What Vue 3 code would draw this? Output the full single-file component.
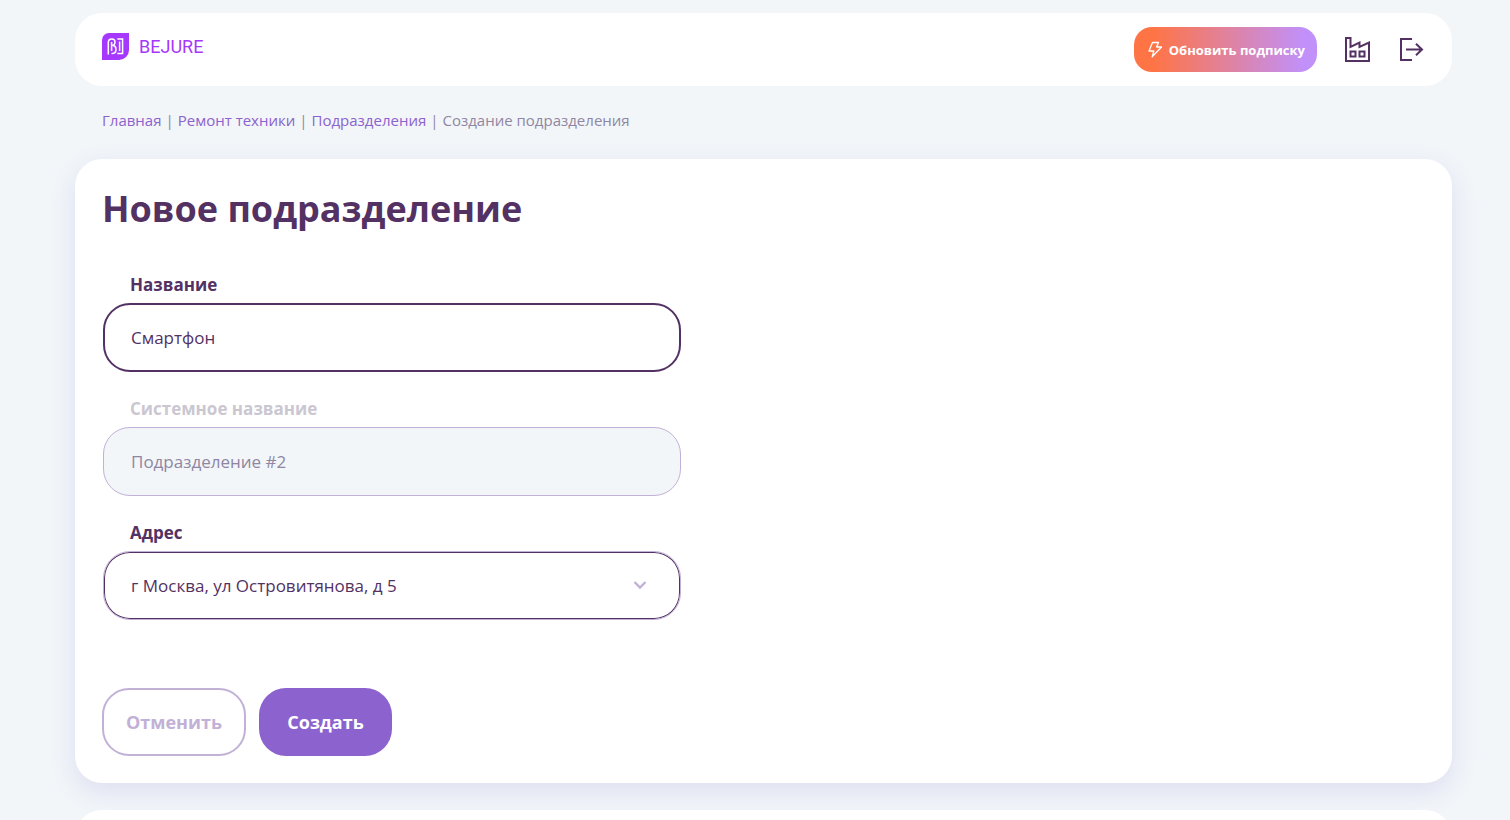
<template>
  <div class="page">
    <header class="header">
      <a href="#" class="logo" aria-label="BEJURE">
        <svg class="logo-mark" viewBox="0 0 27 27" aria-hidden="true">
          <path d="M7 0H27V17A10 10 0 0 1 17 27H0V7A7 7 0 0 1 7 0Z" fill="#a637fd" />
          <g fill="none" stroke="#fff" stroke-width="1.5">
            <path d="M6.3 21.5V9.5Q6.3 6 9.8 6Q13 6 13 9Q13 12.3 9.8 12.3Q14 12.5 14 16.5Q14 20.6 9.5 20.6" />
            <path d="M9.6 9V18M15.3 6H20.6V20.6H15.3M17.6 8.5V18" />
          </g>
        </svg>
        <span class="logo-name">BEJURE</span>
      </a>
      <div class="header-actions">
        <button type="button" class="subscribe">
          <svg viewBox="0 0 16 18" width="16" height="18" aria-hidden="true">
            <path d="M5.5 1.5H11.5L9.5 6H14.5L5.2 15.8L6.8 10H2Z" fill="none" stroke="#fff" stroke-width="1.3" stroke-linejoin="round" />
          </svg>
          Обновить подписку
        </button>
        <button type="button" class="icon-button" aria-label="Организация">
          <svg viewBox="0 0 27 27" width="27" height="27" aria-hidden="true">
            <g fill="none" stroke="#533163" stroke-width="2">
              <path d="M2 25V2H6.5V11L15.5 6.5V11L25 6.5V25Z" />
              <rect x="6.5" y="15.5" width="5" height="5" />
              <rect x="15.5" y="15.5" width="5" height="5" />
            </g>
          </svg>
        </button>
        <button type="button" class="icon-button" aria-label="Выйти">
          <svg viewBox="0 0 27 27" width="27" height="27" aria-hidden="true">
            <path d="M14 3H3V24H14M8 13.5H24M18 7.8L24 13.5L18 19.2" fill="none" stroke="#533163" stroke-width="2" />
          </svg>
        </button>
      </div>
    </header>

    <nav class="breadcrumbs">
      <template v-for="crumb in crumbs" :key="crumb">
        <a href="#">{{ crumb }}</a>
        <span class="separator">|</span>
      </template>
      <span class="current">Создание подразделения</span>
    </nav>

    <main class="card">
      <h1>Новое подразделение</h1>
      <form @submit.prevent>
        <div class="field">
          <label for="name">Название</label>
          <input id="name" v-model="name" type="text" class="control active" />
        </div>
        <div class="field disabled">
          <label for="system-name">Системное название</label>
          <input id="system-name" :value="systemName" type="text" class="control" disabled />
        </div>
        <div class="field">
          <label for="address">Адрес</label>
          <div class="select-wrap">
            <select id="address" v-model="address" class="control">
              <option v-for="item in addresses" :key="item">{{ item }}</option>
            </select>
            <svg class="chevron" viewBox="0 0 14 10" width="14" height="10" aria-hidden="true">
              <path d="M1.5 2L7 7.5L12.5 2" fill="none" stroke="#c2b1d6" stroke-width="2.4" />
            </svg>
          </div>
        </div>
        <div class="buttons">
          <button type="button" class="cancel">Отменить</button>
          <button type="submit" class="create">Создать</button>
        </div>
      </form>
    </main>

    <footer class="footer"></footer>
  </div>
</template>

<script setup>
import { ref } from 'vue'

const crumbs = ['Главная', 'Ремонт техники', 'Подразделения']
const addresses = ['г Москва, ул Островитянова, д 5']

const name = ref('Смартфон')
const systemName = ref('Подразделение #2')
const address = ref(addresses[0])
</script>

<style>
html {
  scrollbar-width: none;
}

body {
  margin: 0;
  background: #f2f6f9;
}
</style>

<style scoped>
.page {
  padding: 13px 58px 0 75px;
  font-family: 'Segoe UI', 'Open Sans', 'Noto Sans', sans-serif;
  color: #533163;
}

button,
input,
select {
  box-sizing: border-box;
  font-family: inherit;
}

button {
  cursor: pointer;
}

.header {
  display: flex;
  align-items: center;
  justify-content: space-between;
  height: 73px;
  padding: 0 27px;
  box-sizing: border-box;
  border-radius: 27px;
  background: #fff;
}

.logo {
  display: flex;
  align-items: center;
  gap: 10px;
  margin-bottom: 6px;
  color: #a637fd;
  text-decoration: none;
}

.logo-mark {
  width: 27px;
  height: 27px;
}

.logo-name {
  font-family: Roboto, sans-serif;
  font-size: 18px;
  line-height: 27px;
}

.header-actions {
  display: flex;
  align-items: center;
  gap: 27px;
}

.subscribe {
  display: flex;
  align-items: center;
  gap: 6px;
  height: 45px;
  padding: 0 12px 0 13px;
  border: 0;
  border-radius: 18px;
  background: linear-gradient(90deg, #ff7444 10%, #c190f8 92%);
  color: #fff;
  font-size: 13px;
  font-weight: 700;
  white-space: nowrap;
}

.icon-button {
  display: flex;
  padding: 0;
  border: 0;
  background: none;
}

.breadcrumbs {
  display: flex;
  gap: 4px;
  padding: 24px 27px 28px;
  font-size: 15px;
  line-height: 21px;
}

.breadcrumbs a {
  color: #8c62ce;
  text-decoration: none;
}

.separator,
.current {
  color: #8f86a3;
}

.card {
  padding: 27px;
  border-radius: 27px;
  background: #fff;
  box-shadow: 0 9px 27px rgba(97, 88, 190, 0.14);
}

h1 {
  margin: 0 0 41px;
  font-size: 36px;
  line-height: 46px;
  font-weight: 700;
}

.field {
  display: flex;
  flex-direction: column;
  gap: 6px;
  max-width: 578px;
  margin: 0 0 25px 1px;
}

label {
  padding-left: 27px;
  font-size: 17px;
  line-height: 24px;
  font-weight: 700;
}

.disabled label {
  color: #cbc7d1;
}

.control {
  width: 100%;
  height: 69px;
  padding: 0 27px;
  border: 1px solid #533163;
  border-radius: 27px;
  outline: 0;
  background: #fff;
  color: #533163;
  font-size: 17px;
}

.control.active {
  padding: 0 26px;
  border-width: 2px;
}

.control:disabled {
  border-color: #c2b1d6;
  background: #f2f6f9;
  color: #8f86a3;
}

.select-wrap {
  position: relative;
}

select.control {
  display: block;
  appearance: none;
  border: 1px solid #c2b1d6;
  box-shadow: inset 0 0 0 1px #533163;
}

.chevron {
  position: absolute;
  top: 29px;
  right: 34px;
  pointer-events: none;
}

.buttons {
  display: flex;
  gap: 13px;
  margin-top: 68px;
}

.cancel,
.create {
  height: 68px;
  border-radius: 27px;
  font-size: 18px;
  font-weight: 700;
}

.cancel {
  min-width: 144px;
  padding: 0 20px;
  border: 2px solid #c2b1d6;
  background: #fff;
  color: #c2b1d6;
}

.create {
  min-width: 133px;
  padding: 0 20px;
  border: 0;
  background: #8c62ce;
  color: #fff;
}

.footer {
  position: relative;
  height: 73px;
  margin-top: 27px;
  border-radius: 27px;
  background: #fff;
}
</style>
